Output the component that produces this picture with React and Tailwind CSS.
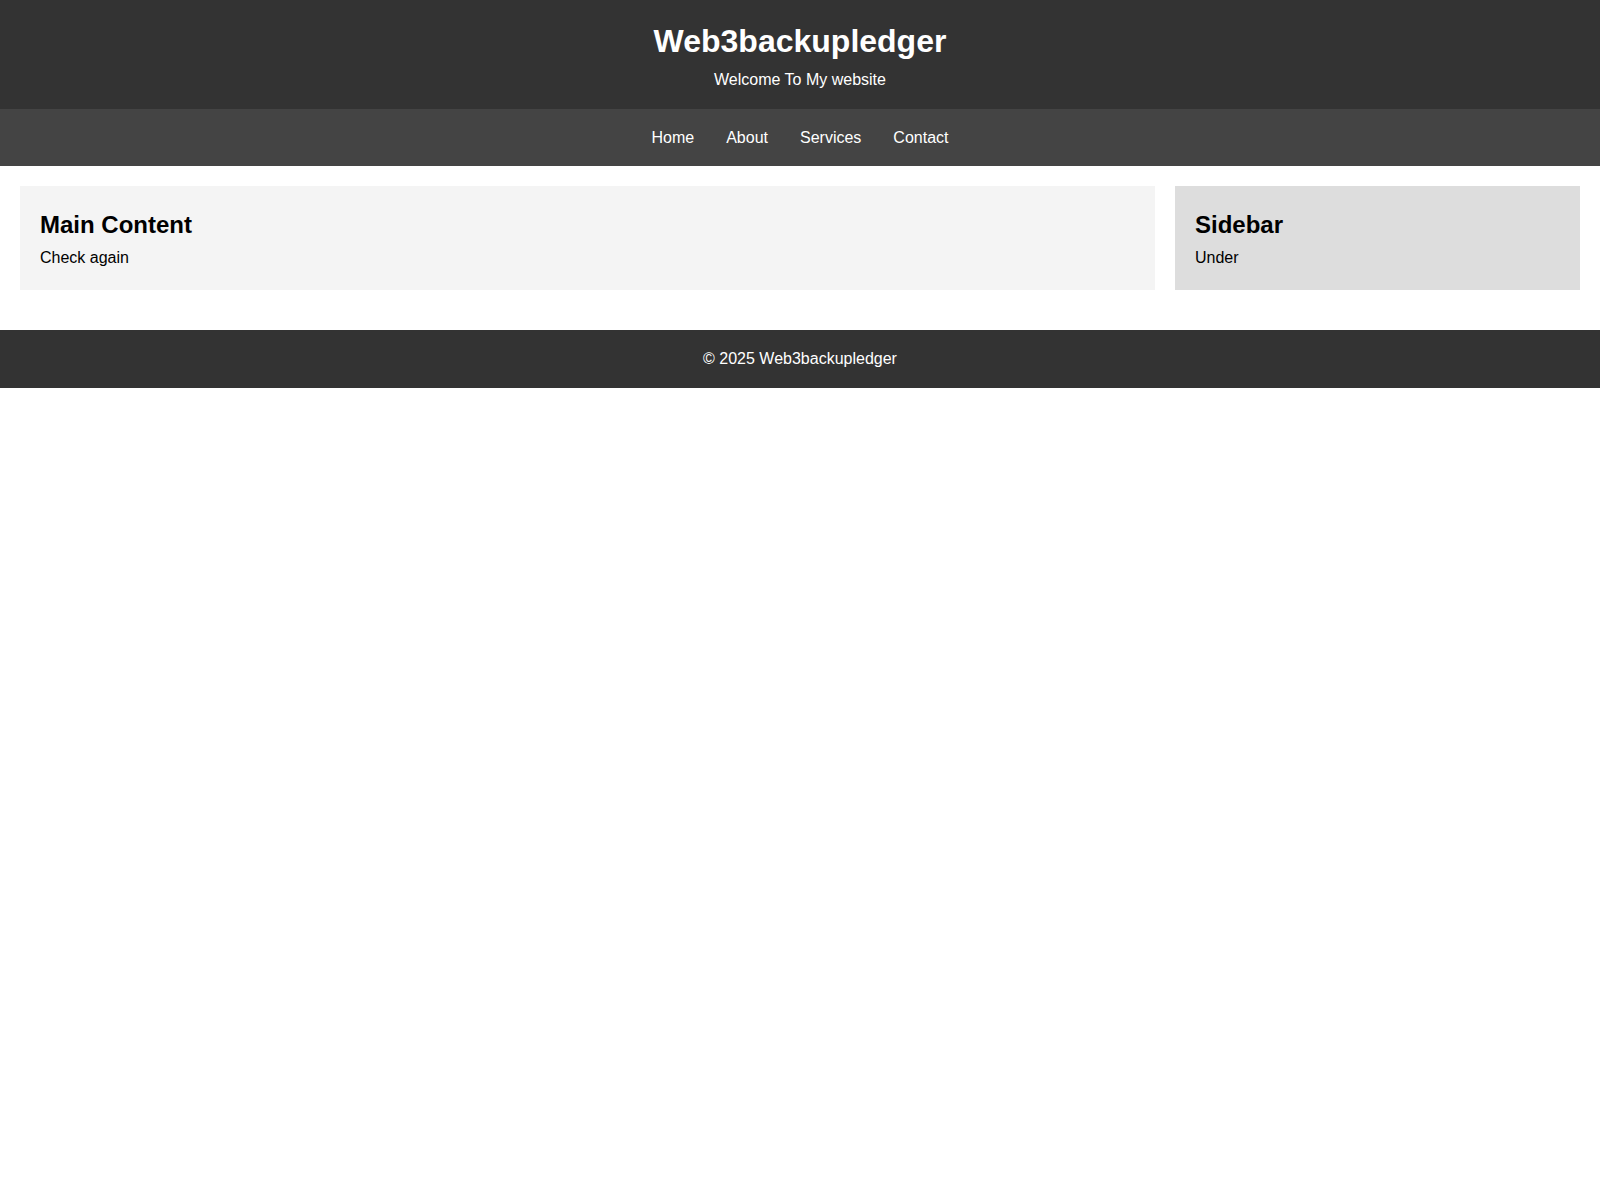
export default function App() {
  const font = { fontFamily: '"Liberation Sans", Arial, sans-serif' };
  return (
    <div style={font} className="min-h-[1200px] bg-white font-['Liberation_Sans',Arial,sans-serif]">
      <header className="bg-[#333333] text-white text-center pt-[23px] pb-[20px]">
        <h1 className="text-[32px] font-bold leading-[37px]">Web3backupledger</h1>
        <p className="mt-[11px] text-[16px] leading-[18px]">Welcome To My website</p>
      </header>
      <nav className="bg-[#444444] pt-[20px] pb-[19px]">
        <ul className="flex justify-center gap-8 text-white text-[16px] leading-[18px]">
          <li>Home</li>
          <li>About</li>
          <li>Services</li>
          <li>Contact</li>
        </ul>
      </nav>
      <main className="flex gap-5 px-5 pt-5 pb-10">
        <section className="flex-[3] bg-[#f4f4f4] px-5 pt-[25px] pb-[23px] text-black">
          <h2 className="text-[24px] font-bold leading-[28px]">Main Content</h2>
          <p className="mt-[10px] text-[16px] leading-[18px]">Check again</p>
        </section>
        <aside className="flex-1 bg-[#dddddd] px-5 pt-[25px] pb-[23px] text-black">
          <h2 className="text-[24px] font-bold leading-[28px]">Sidebar</h2>
          <p className="mt-[10px] text-[16px] leading-[18px]">Under</p>
        </aside>
      </main>
      <footer className="bg-[#333333] text-white text-center pt-[20px] pb-[20px] text-[16px] leading-[18px]">
        © 2025 Web3backupledger
      </footer>
    </div>
  );
}
